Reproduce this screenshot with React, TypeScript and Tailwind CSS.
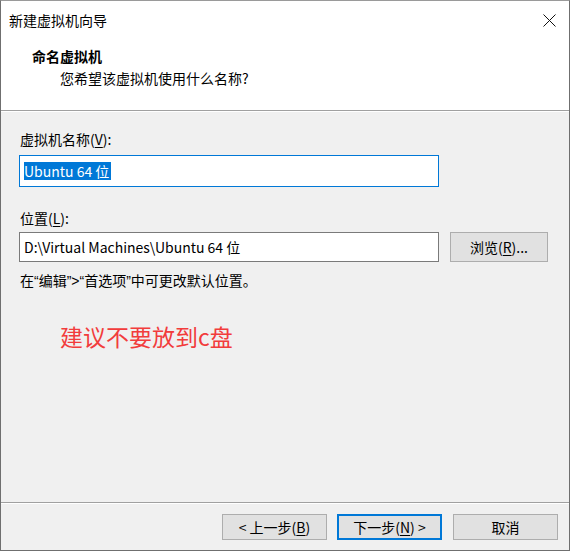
import { type ReactNode } from 'react'

const font = { fontFamily: '"Noto Sans CJK SC", "Noto Sans", sans-serif' }

function Key({ children }: { children: ReactNode }) {
  return <span className="underline underline-offset-[2px]">{children}</span>
}

// Latin-width quotes, as the dialog's UI font draws them
function Q({ children }: { children: ReactNode }) {
  return <span className="font-['Liberation_Sans',sans-serif]">{children}</span>
}

function Button({ children, primary = false }: { children: ReactNode; primary?: boolean }) {
  return (
    <div
      className={
        'flex h-[26px] w-[105px] items-center justify-center bg-[#e1e1e1] text-[14px] leading-[20px] text-black ' +
        (primary ? 'border-2 border-[#0078d7]' : 'border border-[#adadad]')
      }
    >
      {children}
    </div>
  )
}

export default function App() {
  return (
    <div
      style={font}
      className="flex h-[551px] w-[570px] flex-col border border-t-[#9a9a9a] border-x-[#6f6f6f] border-b-[#6f6f6f] bg-[#f0f0f0] text-black"
    >
      {/* title bar + header */}
      <div className="flex h-[109px] flex-col bg-white">
        <div className="flex h-[38px] items-center justify-between pl-[8px] pr-[13px]">
          <span className="text-[14px] leading-[20px]">新建虚拟机向导</span>
          <svg width="13" height="13" viewBox="0 0 13 13">
            <path d="M0.5 0.5 L12.5 12.5 M12.5 0.5 L0.5 12.5" stroke="#111" strokeWidth="1" />
          </svg>
        </div>
        <div className="mt-[7px] pl-[31px] text-[14px] font-bold leading-[20px]">命名虚拟机</div>
        <div className="mt-[2px] pl-[59px] text-[14px] leading-[20px]">您希望该虚拟机使用什么名称?</div>
      </div>
      <div className="h-px bg-[#a0a0a0]" />
      <div className="h-px bg-white" />

      {/* body */}
      <div className="flex flex-1 flex-col px-[18px] pt-[17px] text-[14px] leading-[20px]">
        <div className="ml-[1px]">
          虚拟机名称(<Key>V</Key>):
        </div>
        <div className="mt-[6px] flex h-[32px] w-[420px] items-center border border-[#0078d7] bg-white pl-[4px]">
          <span className="inline-block bg-[#0078d7] pr-[2px] leading-[18px] text-white">Ubuntu 64 位</span>
        </div>

        <div className="ml-[1px] mt-[21px]">
          位置(<Key>L</Key>):
        </div>
        <div className="mt-[4px] flex items-center">
          <div className="flex h-[30px] w-[420px] items-center border border-[#7a7a7a] bg-white pl-[4px]">
            D:\Virtual Machines\Ubuntu 64 位
          </div>
          <div className="ml-[11px] flex h-[30px] w-[98px] items-center justify-center border border-[#adadad] bg-[#e1e1e1]">
            浏览(<Key>R</Key>)...
          </div>
        </div>
        <div className="mt-[8px] ml-[1px]">
          在<Q>“</Q>编辑<Q>”&gt;“</Q>首选项<Q>”</Q>中可更改默认位置。
        </div>

        <div className="ml-[41px] mt-[30px] text-[23px] leading-[31px] text-[#f23c3c]">建议不要放到c盘</div>
      </div>

      {/* footer */}
      <div className="h-px bg-[#a0a0a0]" />
      <div className="h-px bg-white" />
      <div className="flex h-[46px] items-start justify-end gap-[10px] pr-[11px] pt-[10px]">
        <Button>
          &lt; 上一步(<Key>B</Key>)
        </Button>
        <Button primary>
          下一步(<Key>N</Key>) &gt;
        </Button>
        <div className="ml-px">
          <Button>取消</Button>
        </div>
      </div>
    </div>
  )
}
